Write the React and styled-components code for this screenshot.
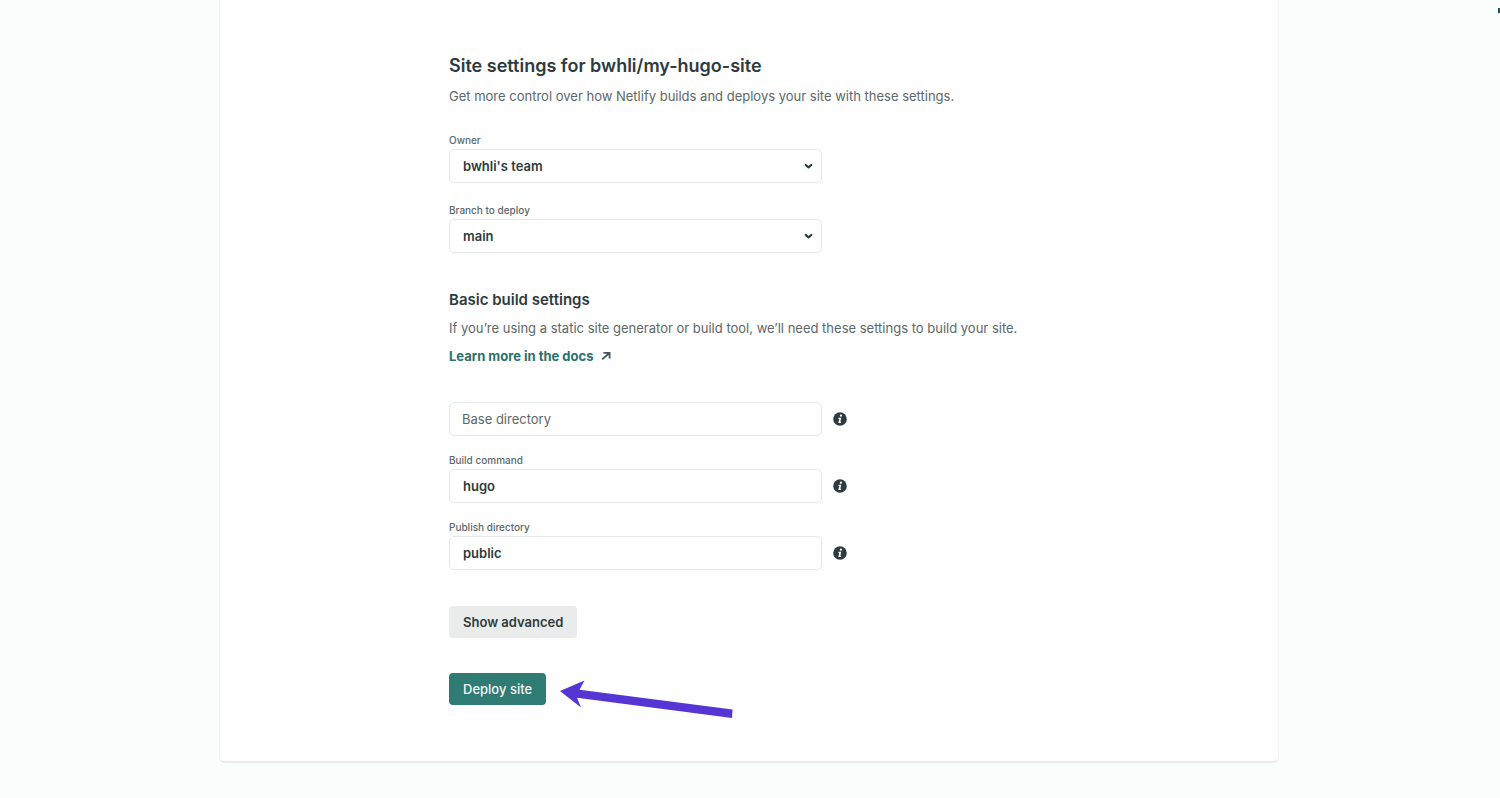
import React from "react";
import styled, { createGlobalStyle, css } from "styled-components";

const GlobalStyle = createGlobalStyle`
  * { box-sizing: border-box; }
  body {
    margin: 0;
    background: #f9fdfc;
    color: #2d3b3e;
    font-family: Inter, "Liberation Sans", sans-serif;
    font-size: 13px;
    line-height: 20px;
  }
  h1, h2, p { margin: 0; }
`;

const Page = styled.div`
  position: relative;
  overflow: hidden;
  min-height: 100vh;
  padding: 0 221px 35px 219px;
`;

const EdgeMark = styled.span`
  position: absolute;
  top: 8px;
  right: 0;
  width: 2px;
  height: 5px;
  background: #24514f;
`;

const Card = styled.main`
  padding: 54px 24px 56px;
  background: #fefefe;
  border: 1px solid #f0f3f3;
  border-top: 0;
  border-bottom: 2px solid #e9ebeb;
  border-radius: 0 0 6px 6px;
`;

const Content = styled.form`
  display: flex;
  flex-direction: column;
  width: 100%;
  max-width: 600px;
  margin: 0 auto;
`;

const Section = styled.section`
  display: flex;
  flex-direction: column;
  align-items: flex-start;
  gap: 8px;
  margin-bottom: ${(p) => p.$after}px;
`;

const Title = styled.h1`
  font-size: 18px;
  line-height: 24px;
  font-weight: 600;
`;

const Subtitle = styled.h2`
  font-size: 15px;
  line-height: 20px;
  font-weight: 600;
`;

const Text = styled.p`
  color: #5c686b;
`;

const DocsLink = styled.a`
  display: inline-flex;
  align-items: center;
  gap: 8px;
  color: #2b716c;
  font-weight: 700;
  text-decoration: none;
  svg { color: #465559; }
`;

const Fields = styled.div`
  display: flex;
  flex-direction: column;
  gap: ${(p) => p.$gap}px;
  margin-bottom: ${(p) => p.$after}px;
`;

const Field = styled.div`
  display: flex;
  flex-direction: column;
  gap: 2px;
`;

const Label = styled.label`
  color: #5c686b;
  font-size: 10px;
  line-height: 14px;
  font-weight: 500;
`;

const ControlRow = styled.div`
  display: flex;
  align-items: center;
  gap: 11px;
`;

const ControlBox = styled.div`
  position: relative;
  width: 373px;
  max-width: 100%;
`;

const control = css`
  display: block;
  width: 100%;
  height: 34px;
  padding: 0 13px;
  border: 1px solid #e5e8e8;
  border-radius: 5px;
  background: #fff;
  color: #2d3b3e;
  font: 600 13px/20px Inter, "Liberation Sans", sans-serif;
`;

const Select = styled.select`
  ${control}
  appearance: none;
`;

const Input = styled.input`
  ${control}
  &::placeholder {
    color: #5c686b;
    font-weight: 400;
    opacity: 1;
  }
  &:placeholder-shown {
    padding-left: 12px;
    font-weight: 400;
  }
`;

const Chevron = styled.svg`
  position: absolute;
  top: 14px;
  right: 9px;
  pointer-events: none;
`;

const InfoButton = styled.button`
  display: flex;
  padding: 0;
  border: 0;
  background: none;
`;

const Actions = styled.div`
  display: flex;
  flex-direction: column;
  align-items: flex-start;
  gap: 35px;
`;

const Button = styled.button`
  height: 32px;
  padding: 0 14px;
  border: 0;
  border-radius: 4px;
  background: ${(p) => (p.$primary ? "#307b74" : "#e9ecea")};
  color: ${(p) => (p.$primary ? "#f3f8f7" : "#2d3b3e")};
  font: ${(p) => (p.$primary ? 500 : 600)} 13px/20px Inter, "Liberation Sans", sans-serif;
`;

const Pointed = styled.div`
  position: relative;
`;

const Arrow = styled.svg`
  position: absolute;
  top: 5px;
  left: calc(100% + 12px);
`;

function SelectField({ id, label, value }) {
  return (
    <Field>
      <Label htmlFor={id}>{label}</Label>
      <ControlBox>
        <Select id={id} defaultValue={value}>
          <option>{value}</option>
        </Select>
        <Chevron width="9" height="7" viewBox="0 0 9 7" fill="none" stroke="#2d3b3e" strokeWidth="2.2" strokeLinecap="round" strokeLinejoin="round" aria-hidden="true">
          <path d="M1.7 2 4.5 4.4 7.3 2" />
        </Chevron>
      </ControlBox>
    </Field>
  );
}

function TextField({ id, label, value, placeholder }) {
  return (
    <Field>
      {label && <Label htmlFor={id}>{label}</Label>}
      <ControlRow>
        <ControlBox>
          <Input id={id} defaultValue={value} placeholder={placeholder} aria-label={placeholder} />
        </ControlBox>
        <InfoButton type="button" aria-label={`About ${label || placeholder}`}>
          <svg width="14" height="14" viewBox="0 0 14 14" aria-hidden="true">
            <circle cx="7" cy="7" r="6.8" fill="#2d3b3e" />
            <circle cx="7.9" cy="3.7" r="1.1" fill="#fff" />
            <path d="M5.6 5.7H8.3L7.3 9.8H8.2L7.9 11H5.3L6.3 6.9H5.3Z" fill="#fff" />
          </svg>
        </InfoButton>
      </ControlRow>
    </Field>
  );
}

export default function App() {
  return (
    <>
      <GlobalStyle />
      <Page>
        <EdgeMark aria-hidden="true" />
        <Card>
          <Content onSubmit={(e) => e.preventDefault()}>
            <Section $after={27}>
              <Title>Site settings for bwhli/my-hugo-site</Title>
              <Text>Get more control over how Netlify builds and deploys your site with these settings.</Text>
            </Section>
            <Fields $gap={20} $after={37}>
              <SelectField id="owner" label="Owner" value="bwhli's team" />
              <SelectField id="branch" label="Branch to deploy" value="main" />
            </Fields>
            <Section $after={36}>
              <Subtitle>Basic build settings</Subtitle>
              <Text>If you’re using a static site generator or build tool, we’ll need these settings to build your site.</Text>
              <DocsLink href="#docs">
                Learn more in the docs
                <svg width="10" height="10" viewBox="0 0 10 10" fill="none" stroke="currentColor" strokeWidth="1.8" aria-hidden="true">
                  <path d="M2.4 1.8H8.6V7.4M8.4 2 1.2 8.4" />
                </svg>
              </DocsLink>
            </Section>
            <Fields $gap={17} $after={36}>
              <TextField id="base" placeholder="Base directory" />
              <TextField id="command" label="Build command" value="hugo" />
              <TextField id="publish" label="Publish directory" value="public" />
            </Fields>
            <Actions>
              <Button type="button">Show advanced</Button>
              <Pointed>
                <Button type="submit" $primary>Deploy site</Button>
                <Arrow width="176" height="42" viewBox="0 0 176 42" fill="#5535d4" aria-hidden="true">
                  <path d="M2 13 26.5 2.5 21.5 11.8 174.5 31.5 174 40 19 19.8 23 29.5Z" />
                </Arrow>
              </Pointed>
            </Actions>
          </Content>
        </Card>
      </Page>
    </>
  );
}
